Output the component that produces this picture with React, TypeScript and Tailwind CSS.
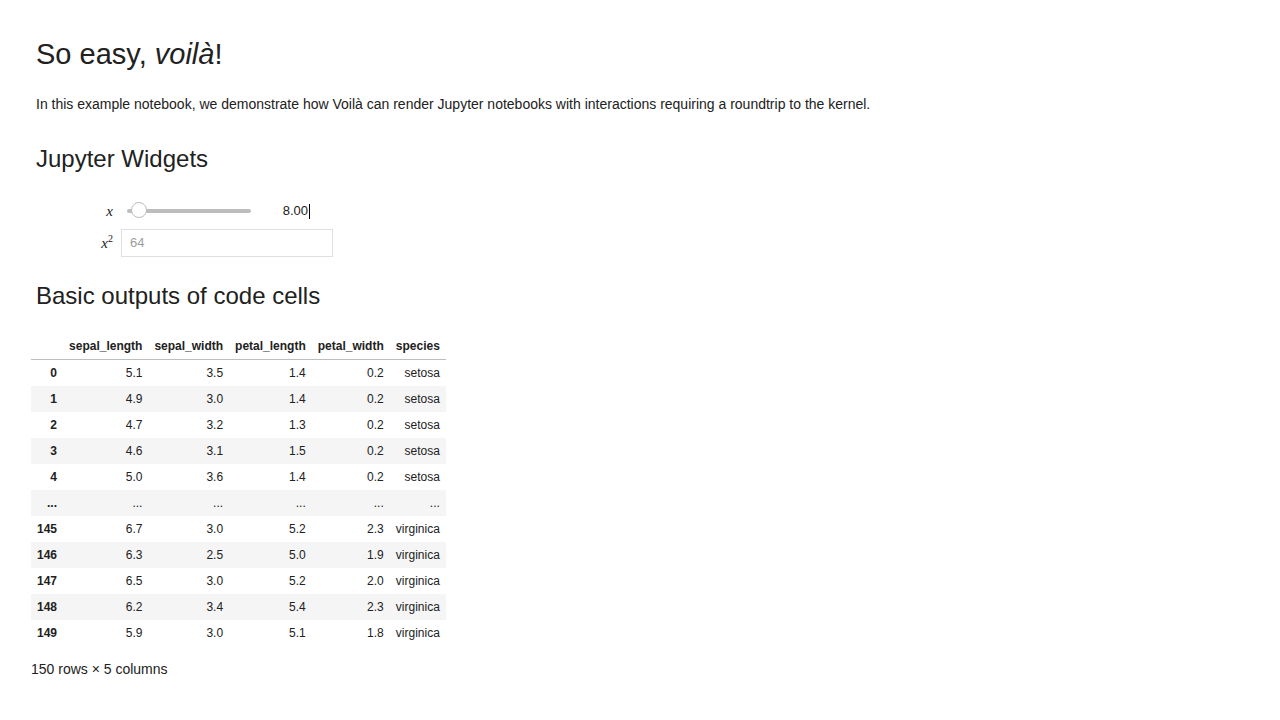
import React from "react";

const rows: [string, string, string, string, string, string][] = [
  ["0", "5.1", "3.5", "1.4", "0.2", "setosa"],
  ["1", "4.9", "3.0", "1.4", "0.2", "setosa"],
  ["2", "4.7", "3.2", "1.3", "0.2", "setosa"],
  ["3", "4.6", "3.1", "1.5", "0.2", "setosa"],
  ["4", "5.0", "3.6", "1.4", "0.2", "setosa"],
  ["...", "...", "...", "...", "...", "..."],
  ["145", "6.7", "3.0", "5.2", "2.3", "virginica"],
  ["146", "6.3", "2.5", "5.0", "1.9", "virginica"],
  ["147", "6.5", "3.0", "5.2", "2.0", "virginica"],
  ["148", "6.2", "3.4", "5.4", "2.3", "virginica"],
  ["149", "5.9", "3.0", "5.1", "1.8", "virginica"],
];

const columns = ["sepal_length", "sepal_width", "petal_length", "petal_width", "species"];

function MathLabel({ sup }: { sup?: boolean }) {
  return (
    <div className="flex w-[80px] shrink-0 items-center justify-end pr-[8px] font-['Liberation_Serif',serif] text-[15px] italic text-[#212121]">
      <span>x</span>
      {sup && <span className="relative -top-[5px] text-[10px] not-italic">2</span>}
    </div>
  );
}

function SliderRow() {
  return (
    <div className="flex h-[28px] items-center">
      <MathLabel />
      <div className="relative ml-[6px] h-[28px] w-[124px]">
        <div className="absolute left-0 right-0 top-[12px] h-[4px] rounded-sm bg-[#bdbdbd]" />
        <div className="absolute left-[4px] top-[5px] h-[16px] w-[16px] rounded-full border border-[#bdbdbd] bg-white" />
      </div>
      <div className="flex w-[59px] items-center justify-end text-[13px] text-[#212121]">
        <span>8.00</span>
        <span className="ml-px inline-block h-[15px] w-px bg-black" />
      </div>
    </div>
  );
}

function InputRow() {
  return (
    <div className="flex h-[28px] items-center">
      <MathLabel sup />
      <div className="flex h-[28px] w-[212px] items-center border border-[#e0e0e0] bg-white px-[8px] text-[13px] text-[#9e9e9e]">
        64
      </div>
    </div>
  );
}

export default function App() {
  return (
    <div className="min-h-screen bg-white font-['Liberation_Sans',Arial,sans-serif] text-[#212121]">
      <div className="px-[36px] pt-[40px]">
        <h1 className="text-[29px] leading-[29px]">
          So easy, <em>voilà</em>!
        </h1>
        <p className="mt-[25px] text-[14px] leading-[20px]">
          In this example notebook, we demonstrate how Voilà can render Jupyter notebooks with
          interactions requiring a roundtrip to the kernel.
        </p>
        <h2 className="mt-[33px] text-[24px] leading-[24px]">Jupyter Widgets</h2>
        <div className="ml-[5px] mt-[26px] flex flex-col gap-[4px]">
          <SliderRow />
          <InputRow />
        </div>
        <h2 className="mt-[27px] text-[24px] leading-[24px]">Basic outputs of code cells</h2>
      </div>
      <div className="px-[31px] pt-[25px]">
        <table className="border-collapse text-[12px] leading-[14px] text-[#212121]">
          <thead>
            <tr className="border-b border-[#bdbdbd]">
              <th className="px-[6px] py-[6px]" />
              {columns.map((c) => (
                <th key={c} className="px-[6px] py-[6px] text-right font-bold">
                  {c}
                </th>
              ))}
            </tr>
          </thead>
          <tbody>
            {rows.map((r, i) => (
              <tr key={r[0] + i} className={i % 2 === 1 ? "bg-[#f5f5f5]" : "bg-white"}>
                {r.map((v, j) => (
                  <td
                    key={j}
                    className={`px-[6px] py-[6px] text-right ${j === 0 ? "font-bold" : ""}`}
                  >
                    {v}
                  </td>
                ))}
              </tr>
            ))}
          </tbody>
        </table>
        <p className="mt-[13px] text-[14px] leading-[20px]">150 rows × 5 columns</p>
      </div>
    </div>
  );
}
